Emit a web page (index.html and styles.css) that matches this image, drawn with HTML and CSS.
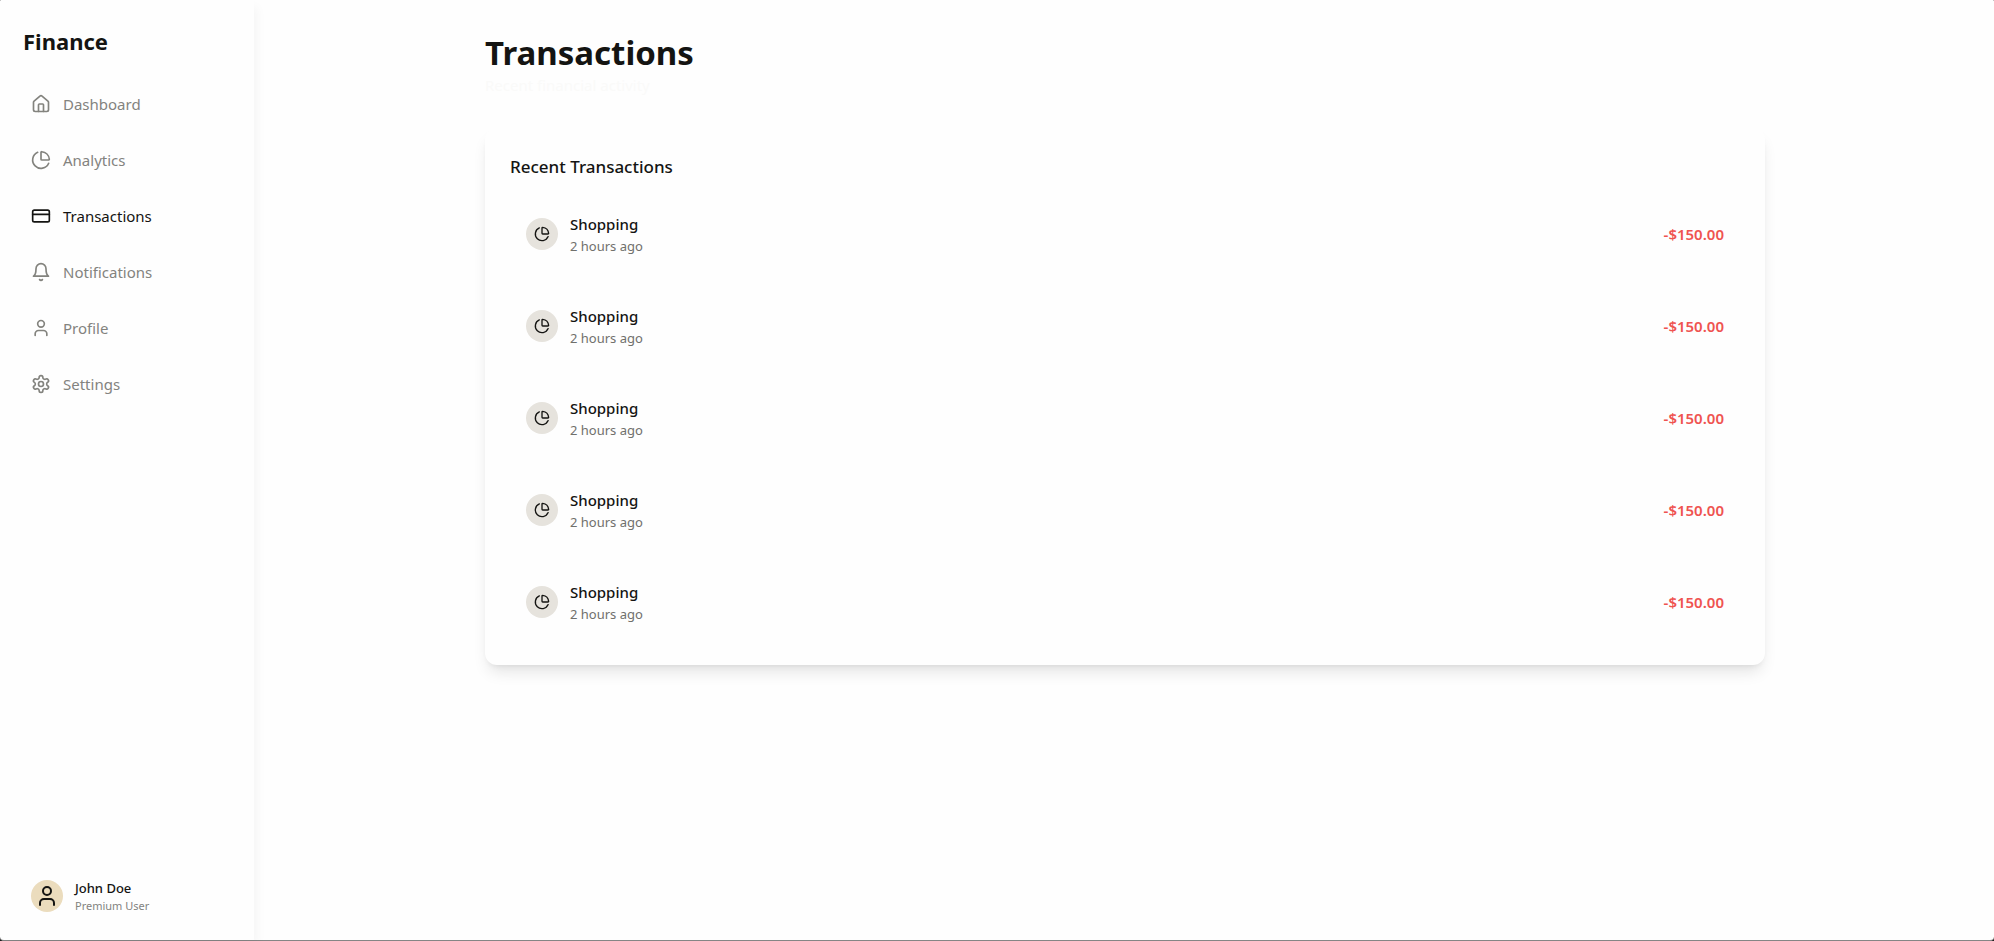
FILE: index.html
```html
<!DOCTYPE html>
<html lang="en">
<head>
<meta charset="utf-8">
<title>Finance</title>
<link rel="stylesheet" href="styles.css">
</head>
<body>
<svg class="sprite" aria-hidden="true">
  <symbol id="home" viewBox="0 0 24 24"><path d="M15 21v-8a1 1 0 0 0-1-1h-4a1 1 0 0 0-1 1v8"/><path d="M3 10a2 2 0 0 1 .709-1.528l7-5.999a2 2 0 0 1 2.582 0l7 5.999A2 2 0 0 1 21 10v9a2 2 0 0 1-2 2H5a2 2 0 0 1-2-2z"/></symbol>
  <symbol id="pie" viewBox="0 0 24 24"><path d="M21 12c.552 0 1.005-.449.95-.998a10 10 0 0 0-8.953-8.951c-.55-.055-.998.398-.998.95v8a1 1 0 0 0 1 1z"/><path d="M21.21 15.89A10 10 0 1 1 8 2.83"/></symbol>
  <symbol id="card" viewBox="0 0 24 24"><rect width="20" height="14" x="2" y="5" rx="2"/><path d="M2 10h20"/></symbol>
  <symbol id="bell" viewBox="0 0 24 24"><path d="M6 8a6 6 0 0 1 12 0c0 7 3 9 3 9H3s3-2 3-9"/><path d="M10.3 21a1.94 1.94 0 0 0 3.4 0"/></symbol>
  <symbol id="user" viewBox="0 0 24 24"><path d="M19 21v-2a4 4 0 0 0-4-4H9a4 4 0 0 0-4 4v2"/><circle cx="12" cy="7" r="4"/></symbol>
  <symbol id="gear" viewBox="0 0 24 24"><path d="M12.22 2h-.44a2 2 0 0 0-2 2v.18a2 2 0 0 1-1 1.73l-.43.25a2 2 0 0 1-2 0l-.15-.08a2 2 0 0 0-2.73.73l-.22.38a2 2 0 0 0 .73 2.73l.15.1a2 2 0 0 1 1 1.72v.51a2 2 0 0 1-1 1.74l-.15.09a2 2 0 0 0-.73 2.73l.22.38a2 2 0 0 0 2.73.73l.15-.08a2 2 0 0 1 2 0l.43.25a2 2 0 0 1 1 1.73V20a2 2 0 0 0 2 2h.44a2 2 0 0 0 2-2v-.18a2 2 0 0 1 1-1.73l.43-.25a2 2 0 0 1 2 0l.15.08a2 2 0 0 0 2.73-.73l.22-.39a2 2 0 0 0-.73-2.73l-.15-.08a2 2 0 0 1-1-1.74v-.5a2 2 0 0 1 1-1.74l.15-.09a2 2 0 0 0 .73-2.73l-.22-.38a2 2 0 0 0-2.73-.73l-.15.08a2 2 0 0 1-2 0l-.43-.25a2 2 0 0 1-1-1.73V4a2 2 0 0 0-2-2z"/><circle cx="12" cy="12" r="3"/></symbol>
</svg>
<div class="app">
  <aside class="sidebar">
    <div class="brand">Finance</div>
    <nav class="nav">
      <a class="nav-link" href="#"><svg class="icon"><use href="#home"/></svg>Dashboard</a>
      <a class="nav-link" href="#"><svg class="icon"><use href="#pie"/></svg>Analytics</a>
      <a class="nav-link active" href="#" aria-current="page"><svg class="icon"><use href="#card"/></svg>Transactions</a>
      <a class="nav-link" href="#"><svg class="icon"><use href="#bell"/></svg>Notifications</a>
      <a class="nav-link" href="#"><svg class="icon"><use href="#user"/></svg>Profile</a>
      <a class="nav-link" href="#"><svg class="icon"><use href="#gear"/></svg>Settings</a>
    </nav>
    <div class="account">
      <span class="avatar"><svg class="icon icon-large"><use href="#user"/></svg></span>
      <div>
        <div class="account-name">John Doe</div>
        <div class="account-plan">Premium User</div>
      </div>
    </div>
  </aside>
  <main class="main">
    <div class="container">
      <h1 class="title">Transactions</h1>
      <p class="subtitle">Recent financial activity</p>
      <section class="panel">
        <h2 class="panel-title">Recent Transactions</h2>
        <ul class="list">
          <li class="row"><span class="badge"><svg class="icon icon-small"><use href="#pie"/></svg></span><div class="details"><div class="name">Shopping</div><div class="time">2 hours ago</div></div><span class="amount">-$150.00</span></li>
          <li class="row"><span class="badge"><svg class="icon icon-small"><use href="#pie"/></svg></span><div class="details"><div class="name">Shopping</div><div class="time">2 hours ago</div></div><span class="amount">-$150.00</span></li>
          <li class="row"><span class="badge"><svg class="icon icon-small"><use href="#pie"/></svg></span><div class="details"><div class="name">Shopping</div><div class="time">2 hours ago</div></div><span class="amount">-$150.00</span></li>
          <li class="row"><span class="badge"><svg class="icon icon-small"><use href="#pie"/></svg></span><div class="details"><div class="name">Shopping</div><div class="time">2 hours ago</div></div><span class="amount">-$150.00</span></li>
          <li class="row"><span class="badge"><svg class="icon icon-small"><use href="#pie"/></svg></span><div class="details"><div class="name">Shopping</div><div class="time">2 hours ago</div></div><span class="amount">-$150.00</span></li>
        </ul>
      </section>
    </div>
  </main>
</div>
</body>
</html>
```
FILE: styles.css
```css
* { box-sizing: border-box; margin: 0; padding: 0; }
html { background: #1c1c1c; }
body {
  font-family: "Segoe UI", "Noto Sans", "Open Sans", sans-serif;
  font-size: 15px;
  line-height: 24px;
  color: #141412;
}
.sprite { display: none; }
.app {
  display: flex;
  min-height: 100vh;
  background: #fefefe;
  border-bottom: 1px solid #858585;
  border-radius: 1px 1px 4px 4px;
}
.icon {
  width: 20px;
  height: 20px;
  flex: none;
  fill: none;
  stroke: currentColor;
  stroke-width: 2;
  stroke-linecap: round;
  stroke-linejoin: round;
}
.icon-small { width: 16px; height: 16px; }
.icon-large { width: 24px; height: 24px; }

.sidebar {
  display: flex;
  flex-direction: column;
  width: 254px;
  flex: none;
  margin-right: 2px;
  padding: 23px 23px 26px;
  box-shadow: 4px 6px 10px -1px rgba(0, 0, 0, 0.04);
}
.brand { font-size: 22px; font-weight: 700; line-height: 36px; }
.nav { display: flex; flex-direction: column; gap: 16px; margin-top: 25px; }
.nav-link {
  display: flex;
  align-items: center;
  gap: 12px;
  padding: 8px;
  color: #83837e;
  text-decoration: none;
}
.nav-link.active { color: #141412; }
.account { display: flex; align-items: center; gap: 12px; margin-top: auto; padding: 0 8px; }
.avatar, .badge {
  display: flex;
  align-items: center;
  justify-content: center;
  flex: none;
  width: 32px;
  height: 32px;
  border-radius: 50%;
}
.avatar { background: #ebdcbd; }
.account-name { font-size: 13px; font-weight: 500; line-height: 20px; }
.account-plan { font-size: 11px; line-height: 16px; color: #83837e; }

.main { flex: 1; padding: 32px; }
.container { max-width: 1280px; margin: 0 auto; }
.title { font-size: 33px; font-weight: 700; line-height: 42px; }
.subtitle { line-height: 22px; color: #fafaf9; }
.panel {
  margin-top: 32px;
  padding: 25px;
  border-radius: 12px;
  background: #fefefe;
  box-shadow: 0 10px 15px -3px rgba(0, 0, 0, 0.1), 0 4px 6px -4px rgba(0, 0, 0, 0.1);
}
.panel-title { font-size: 17px; font-weight: 500; line-height: 28px; }
.list { display: flex; flex-direction: column; gap: 16px; margin-top: 15px; list-style: none; }
.row { display: flex; align-items: center; gap: 12px; padding: 16px; }
.badge { background: #e6e3dd; }
.details { flex: 1; }
.name { font-weight: 500; }
.time { font-size: 13px; line-height: 20px; color: #70706c; }
.amount { font-weight: 600; color: #ef5350; }
```
